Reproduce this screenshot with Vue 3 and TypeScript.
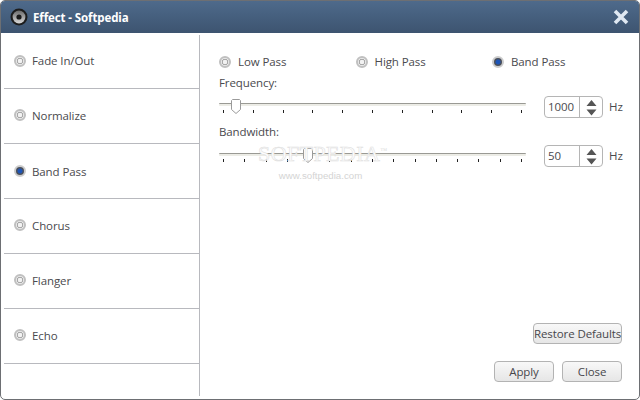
<template>
  <div class="window">
    <div class="titlebar">
      <svg class="logo" width="18" height="18" viewBox="0 0 18 18">
        <defs>
          <linearGradient id="cone" x1="0" y1="0" x2="0" y2="1">
            <stop offset="0" stop-color="#6a6a6a" />
            <stop offset="1" stop-color="#d8d8d8" />
          </linearGradient>
        </defs>
        <circle cx="9" cy="9" r="8.5" fill="#1c1c1c" />
        <circle cx="9" cy="9" r="6.4" fill="url(#cone)" />
        <circle cx="9" cy="9" r="2.6" fill="#1a1a1a" />
      </svg>
      <span class="title">Effect - Softpedia</span>
      <svg class="close-x" width="16" height="16" viewBox="0 0 16 16">
        <path d="M2 2 L14 14 M14 2 L2 14" stroke="#dfe8f2" stroke-width="3.6" fill="none" />
      </svg>
    </div>
    <div class="body">
      <div class="sidebar">
        <div v-for="e in effects" :key="e" class="effect" :class="{ active: e === 'Band Pass' }">
          <span class="radio" :class="{ on: e === 'Band Pass' }"></span>
          <span>{{ e }}</span>
        </div>
      </div>
      <div class="main">
        <div class="modes">
          <div v-for="m in modes" :key="m" class="mode">
            <span class="radio" :class="{ on: m === 'Band Pass' }"></span>
            <span>{{ m }}</span>
          </div>
        </div>
        <div v-for="s in sliders" :key="s.label" class="setting">
          <div class="setting-label">{{ s.label }}</div>
          <div class="setting-row">
            <div class="slider">
              <div class="track"></div>
              <div class="ticks">
                <i v-for="n in s.ticks" :key="n"></i>
              </div>
              <svg class="thumb" :style="{ left: s.thumb + 'px' }" width="10" height="15" viewBox="0 0 10 15">
                <path d="M1.5 .5 H8.5 L9.5 1.5 V10.5 L5 14.5 L.5 10.5 V1.5 Z" fill="#fff" stroke="#9a9a9a" />
              </svg>
            </div>
            <div class="spin">
              <span class="spin-value">{{ s.value }}</span>
              <span class="spin-arrows">
                <svg width="11" height="17" viewBox="0 0 11 17">
                  <path d="M5.5 1 L10.5 7 H.5 Z M.5 10.5 H10.5 L5.5 16.5 Z" fill="#555" />
                </svg>
              </span>
            </div>
            <span class="unit">Hz</span>
          </div>
        </div>
        <div class="footer">
          <button class="btn restore">Restore Defaults</button>
          <div class="actions">
            <button class="btn">Apply</button>
            <button class="btn">Close</button>
          </div>
        </div>
        <div class="watermark">
          <div class="wm-big">SOFTPEDIA<sup>™</sup></div>
          <div class="wm-small">www.softpedia.com</div>
        </div>
      </div>
    </div>
  </div>
</template>

<script setup lang="ts">
const effects = ['Fade In/Out', 'Normalize', 'Band Pass', 'Chorus', 'Flanger', 'Echo']
const modes = ['Low Pass', 'High Pass', 'Band Pass']
const sliders = [
  { label: 'Frequency:', value: '1000', ticks: 11, thumb: 12 },
  { label: 'Bandwidth:', value: '50', ticks: 15, thumb: 84 },
]
</script>

<style>
html,
body {
  margin: 0;
  background: #fff;
}
</style>

<style scoped>
.window {
  width: 640px;
  height: 400px;
  box-sizing: border-box;
  border: 1px solid #6d6f73;
  border-radius: 5px;
  display: flex;
  flex-direction: column;
  overflow: hidden;
  background: #fff;
  font-family: 'Open Sans', 'Noto Sans', sans-serif;
  font-size: 11.5px;
  letter-spacing: -0.1px;
  color: #4a4a4e;
}
.titlebar {
  height: 32px;
  flex: none;
  display: flex;
  align-items: center;
  padding: 0 10px 0 9px;
  background: linear-gradient(#4e6a8b, #3d5470);
}
.logo {
  margin-right: 5px;
}
.title {
  color: #fff;
  font-weight: 700;
}
.close-x {
  margin-left: auto;
}
.body {
  flex: 1;
  display: flex;
  position: relative;
  padding-bottom: 3px;
  min-height: 0;
}
.sidebar {
  width: 195px;
  margin-left: 3px;
  flex: none;
  border-right: 1px solid #b8b9be;
  margin-top: 2px;
}
.effect {
  box-sizing: border-box;
  height: 55px;
  border-bottom: 1px solid #b8b9be;
  display: flex;
  align-items: center;
  gap: 6px;
  padding: 0 0 2px 10px;
}
.effect.active {
  padding-bottom: 0;
}
.effect:first-child {
  height: 54px;
}
.radio {
  width: 12px;
  height: 12px;
  box-sizing: border-box;
  border-radius: 50%;
  border: 2px solid #c0c0c0;
  background: radial-gradient(circle, #f2f2f2 0 2px, #a9a9a9 2.5px 3px, #e8e8e8 3.5px);
  flex: none;
}
.radio.on {
  border-color: #cccccc;
  background: radial-gradient(circle, #1d55b8 0 2px, #4a4f5a 3px 4px);
}
.main {
  flex: 1;
  display: flex;
  flex-direction: column;
  padding: 0 17px 0 19px;
  min-width: 0;
}
.modes {
  display: flex;
  padding-top: 20px;
  height: 17px;
  align-items: center;
}
.mode {
  width: 136.5px;
  flex: none;
  display: flex;
  align-items: center;
  gap: 7px;
}
.setting {
  margin-top: 4px;
}
.setting-label {
  height: 17px;
  line-height: 17px;
}
.setting-row {
  display: flex;
  align-items: flex-start;
  margin-top: 4px;
  height: 24px;
}
.slider {
  position: relative;
  flex: none;
  width: 307px;
  height: 24px;
  margin-right: 18px;
}
.track {
  margin-top: 8px;
  height: 1px;
  background: #9a9a94;
  border-bottom: 2px solid #ecece6;
  border-radius: 1px;
}
.setting + .setting .track {
  margin-top: 9px;
}
.ticks {
  display: flex;
  justify-content: space-between;
  padding: 0 4px;
  margin-top: 4px;
}
.setting + .setting .ticks {
  margin-top: 3px;
}
.ticks i {
  width: 1px;
  height: 3px;
  background: #222;
}
.thumb {
  position: absolute;
  top: 4px;
}
.spin {
  flex: none;
  width: 59px;
  height: 22px;
  margin-top: 1px;
  box-sizing: border-box;
  border: 1px solid #b5b5b5;
  border-radius: 4px;
  display: flex;
  background: #fff;
}
.spin-value {
  flex: 1;
  padding-left: 3px;
  line-height: 20px;
}
.spin-arrows {
  width: 22px;
  border-left: 1px solid #b5b5b5;
  display: flex;
  align-items: center;
  justify-content: center;
}
.unit {
  flex: none;
  margin-left: 6px;
  line-height: 24px;
}
.footer {
  margin-top: auto;
  display: flex;
  flex-direction: column;
  align-items: flex-end;
  gap: 17px;
  padding-bottom: 14px;
}
.actions {
  display: flex;
  gap: 8px;
}
.btn {
  width: 60px;
  height: 21px;
  padding: 0;
  box-sizing: border-box;
  border: 1px solid #b3b3b3;
  border-radius: 4px;
  background: linear-gradient(#f8f8f8, #e6e6e6);
  font: inherit;
  letter-spacing: inherit;
  color: #47474b;
  white-space: nowrap;
}
.btn.restore {
  width: 89px;
}
.watermark {
  position: absolute;
  left: 257px;
  top: 107px;
  pointer-events: none;
  text-align: center;
  width: 125px;
}
.wm-big {
  font-family: 'Liberation Serif', serif;
  font-size: 22px;
  line-height: 22px;
  letter-spacing: 0.4px;
  white-space: nowrap;
  color: #fdfdfd;
  -webkit-text-stroke: 0.5px #dcdcdc;
}
.wm-big sup {
  font-size: 7px;
  -webkit-text-stroke: 0;
  color: #dcdcdc;
}
.wm-small {
  font-family: 'Liberation Sans', sans-serif;
  font-size: 9.7px;
  letter-spacing: 0;
  line-height: 12px;
  margin-top: 5px;
  color: #d4d4d4;
}
</style>
